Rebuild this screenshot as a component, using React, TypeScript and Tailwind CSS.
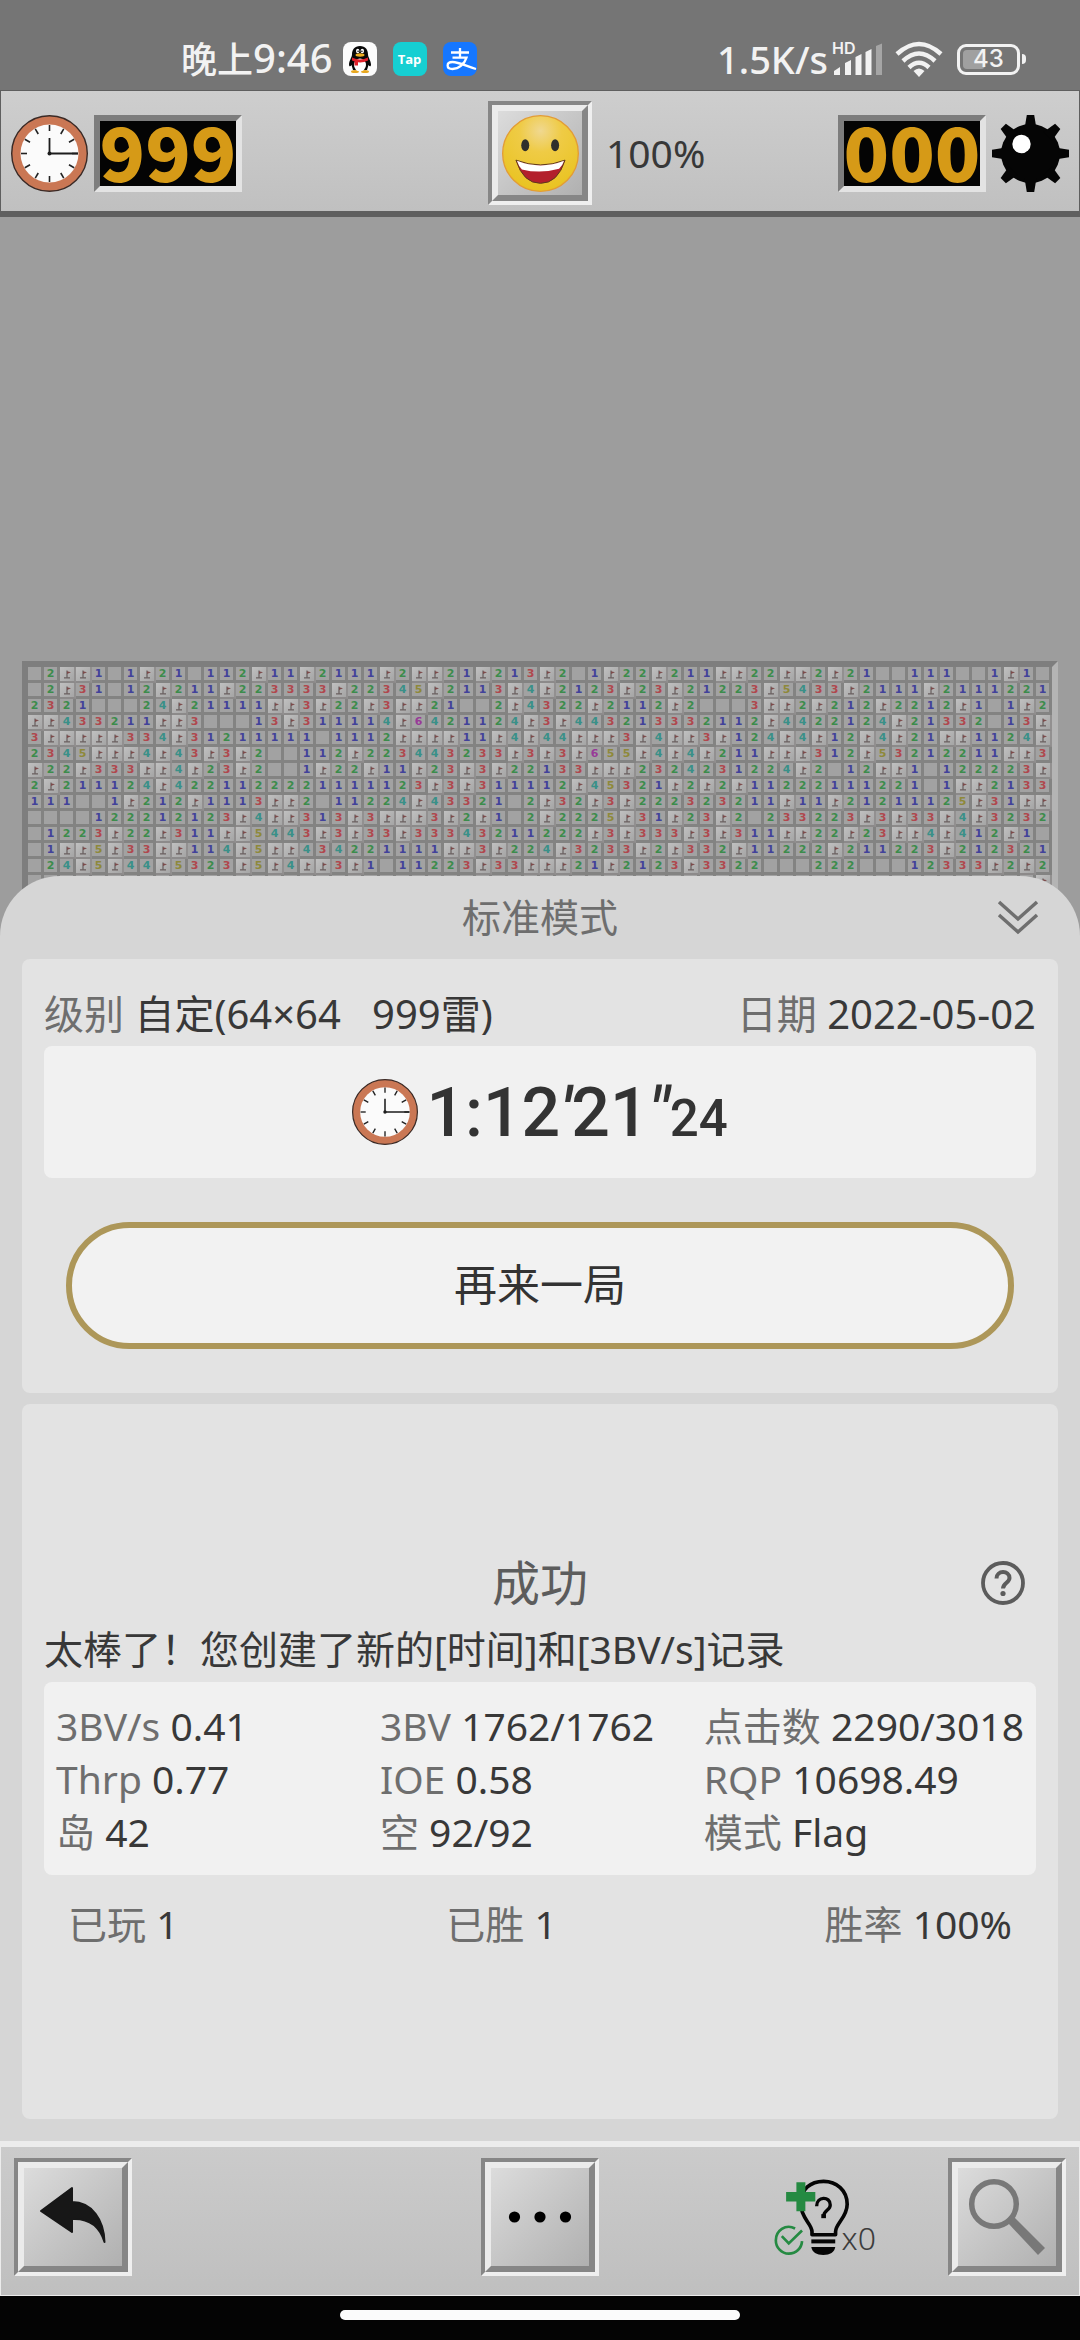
import React from "react";

const CJK = "font-['Noto_Sans','Noto_Sans_CJK_SC',sans-serif]";

/* "." is an opened empty cell, "F" a flagged one, digits are mine counts. */
const ROWS = [
  ".2FF1.1F21.112F11F211" + "1F2FF21F213F2.1F22F211" + "FF22FF2F21..111..1F1.",
  ".2F31.12F211F223333F2" + "2345F2113F4F2123F23F21" + "223F5433F2111F2111221",
  "2321...24F21111FF3F22" + "F3FF21..2F4322F2112F2." + "..3FF2F212F2212F1.1F2",
  "FF433211FF3...13F3111" + "14F6421124F3F443213332" + "112F4422124F21332.13F",
  "3FFFFF334F31211111.11" + "12FFFF11F4F44FFF3F4FF3" + "F124F4F12F4F21FF1124F",
  "2345FFF4F43F3F2..112F" + "223443233F3F3F655F4F4F" + "211FFF312F53212211FF3",
  "F22F333FF4F23F2..1F22" + "F11F23F3F22133FFF23242" + "31224F2.12FF1.122223F",
  "2F211124F422112222111" + "1123F3F311112F45321F2F" + "2F11222111221.1FF2133",
  "111..1F212F1113FF2.11" + "224F43321.2F32F3F22232" + "3211F11F21211125F31FF",
  "....122212123F4FF313F" + "3FFF3F2F1.2F2225F31F23" + "F2.233223F3F33F4F3232",
  ".1223F22F311FF5443F3F" + "33F33343211222F3F333F3" + "F311FF22F23FF4F412F1.",
  ".1FF5F33FF114F5FF4342" + "21111FF3F224F3233F2F33" + "2F11222F211223F212321",
  ".24F5F44F5323F5F4FF3F" + "1.11223F33FFF21F2123F3" + "322...222...12333F2F2",
  "....................." + "......................" + "....................F",
];

const NUM_COLOR: Record<string, string> = {
  "1": "text-[#42429a]",
  "2": "text-[#3c8c4c]",
  "3": "text-[#b0484e]",
  "4": "text-[#3a9088]",
  "5": "text-[#8e893a]",
  "6": "text-[#983a98]",
};

function Cell({ value }: { value: string }) {
  if (value === "F") {
    return (
      <div className="flex aspect-square items-center justify-center border-r-2 border-b-2 border-r-[#929090] border-b-[#8c8a8a] bg-gradient-to-br from-[#c0c0c0] to-[#a5a5a5]">
        <svg viewBox="0 0 14 14" className="size-full" aria-hidden="true">
          <path d="M7 3.5V10.5M4 10.900H10" stroke="#574a4a" strokeWidth="1" fill="none" />
          <path d="M7 4.300L11 5.300L7 7Z" fill="#7c4a4a" />
        </svg>
      </div>
    );
  }
  return (
    <div className="flex aspect-square items-center justify-center border-r-[3px] border-b-[3px] border-[#838382] bg-[#a2a2a2] font-['DejaVu_Sans'] text-[11px] leading-none font-bold">
      <span className={NUM_COLOR[value]}>{value === "." ? "" : value}</span>
    </div>
  );
}

function ClockIcon({ className }: { className: string }) {
  return (
    <svg viewBox="0 0 77 77" className={className} aria-hidden="true">
      <circle cx="38.5" cy="38.5" r="37.8" fill="#ca7754" stroke="#3a2a26" strokeWidth="1.4" />
      <circle cx="38.5" cy="38.5" r="29" fill="#fbfbfb" />
      {Array.from({ length: 12 }, (_, i) => (
        <path key={i} d="M38.5 10V16" stroke="#222" strokeWidth="1.6" transform={`rotate(${i * 30} 38.5 38.5)`} />
      ))}
      <path d="M38.5 23V38.5H67" stroke="#1d1d1d" strokeWidth="1.8" fill="none" />
      <circle cx="38.5" cy="38.5" r="2" fill="#1d1d1d" />
    </svg>
  );
}

function MineIcon() {
  return (
    <svg viewBox="0 0 77 77" className="size-[77px]" aria-hidden="true">
      <circle cx="38.5" cy="38.5" r="29.5" fill="#050505" />
      {Array.from({ length: 8 }, (_, i) => (
        <path key={i} d="M34.8 0H42.2L44.5 14H32.5Z" fill="#050505" transform={`rotate(${i * 45} 38.5 38.5)`} />
      ))}
      <circle cx="29.5" cy="29" r="9.2" fill="#fff" />
    </svg>
  );
}

function SmileIcon() {
  return (
    <svg viewBox="54 56 232 232" className="size-[77px]" aria-hidden="true">
      <defs>
        <radialGradient id="face" cx="0.5" cy="0.2" r="0.8">
          <stop offset="0" stopColor="#f0d890" />
          <stop offset="0.35" stopColor="#efcb45" />
          <stop offset="1" stopColor="#e9c320" />
        </radialGradient>
      </defs>
      <circle cx="170" cy="172" r="114" fill="url(#face)" stroke="#e39c35" strokeWidth="4" />
      <ellipse cx="124" cy="147" rx="12" ry="18" fill="#2f2f2c" />
      <ellipse cx="214" cy="147" rx="12" ry="18" fill="#2f2f2c" />
      <path d="M96 192Q170 221 244 192Q222 262 170 262Q118 262 96 192Z" fill="#b3202c" stroke="#5c3a1c" strokeWidth="3" />
      <path d="M99 194Q170 222 241 194Q236 210 226 218Q170 234 114 220Q104 210 99 194Z" fill="#fff" />
    </svg>
  );
}

function QQIcon() {
  return (
    <svg viewBox="0 0 34 34" className="size-[34px]" aria-hidden="true">
      <rect width="34" height="34" rx="8" fill="#fcfcfc" />
      <ellipse cx="12" cy="29.5" rx="4" ry="1.6" fill="#e8a820" />
      <ellipse cx="22" cy="29.5" rx="4" ry="1.6" fill="#e8a820" />
      <path d="M17 4C11.5 4 9 8 9 12.500C9 15 6 19 6 22.500C6 25 7.500 24.500 8.500 23L10 28H24L25.500 23C26.500 24.500 28 25 28 22.500C28 19 25 15 25 12.500C25 8 22.500 4 17 4Z" fill="#080808" />
      <ellipse cx="17" cy="23" rx="6" ry="6.500" fill="#fff" />
      <ellipse cx="14.700" cy="9" rx="1.700" ry="2.300" fill="#fff" />
      <ellipse cx="19.300" cy="9" rx="1.700" ry="2.300" fill="#fff" />
      <circle cx="15.100" cy="9.300" r="0.800" />
      <circle cx="18.900" cy="9.300" r="0.800" />
      <ellipse cx="17" cy="13" rx="4.500" ry="1.700" fill="#efae20" />
      <path d="M9 15.500Q17 19.500 25 15.500V18.500Q20 21 15 20.300V23.500H11.500V19.500L9 18.500Z" fill="#e0212b" />
    </svg>
  );
}

function PayIcon() {
  return (
    <svg viewBox="0 0 34 34" className="size-[34px]" aria-hidden="true">
      <rect width="34" height="34" rx="8" fill="#1677ff" />
      <path
        d="M8 10.500H26M17 6V15.500M9.500 15.700H23.500C21.500 22 16 27 9.500 27C3 27 3 20 9.500 20C16 20 24 24.500 33 27"
        stroke="#fff"
        strokeWidth="2.300"
        fill="none"
      />
    </svg>
  );
}

function StatusBar() {
  return (
    <div className={`flex h-[90px] items-center justify-between bg-[#757575] pt-[28px] pr-[54px] pl-[181px] text-[#f2f2f2] ${CJK}`}>
      <div className="flex items-center">
        <span className="mr-[10px] font-medium">
          <span className="text-[36px] leading-[40px]">晚上</span>
          <span className="text-[40px] leading-[40px]">9:46</span>
        </span>
        <div className="flex gap-4">
          <QQIcon />
          <span className="flex size-[34px] items-center justify-center rounded-lg bg-[#16cfd2] font-['Open_Sans'] text-[13px] leading-none font-bold text-white">
            Tap
          </span>
          <PayIcon />
        </div>
      </div>
      <div className="flex items-center">
        <span className="text-[38px] leading-[40px] font-medium">1.5K/s</span>
        <div className="relative mr-3 ml-[6px] h-[34px] w-[49px]">
          <span className="absolute -top-[2px] -left-[2px] font-['Inter'] text-[16px] leading-[16px] font-semibold">HD</span>
          <svg viewBox="0 0 49 34" className="size-full" aria-hidden="true">
            <path d="M0 33V29L6 25V33ZM11 33V21L17 18V33ZM21.500 33V15L27.500 12V33ZM31.500 33V10L37.500 7V33Z" fill="#f2f2f2" />
            <path d="M42 33V4L48 1.500V33Z" fill="#a5a5a5" />
          </svg>
        </div>
        <svg viewBox="0 0 48 36" className="mr-[14px] h-[36px] w-[48px]" aria-hidden="true">
          <g fill="none" stroke="#f2f2f2" strokeWidth="4.500">
            <path d="M2 13Q24 -7 46 13" />
            <path d="M8 20Q24 5 40 20" />
            <path d="M14 26.500Q24 17 34 26.500" />
          </g>
          <path d="M18.500 30Q24 25 29.500 30L24 36Z" fill="#f2f2f2" />
        </svg>
        <div className="flex items-center gap-[2px]">
          <div className="relative flex h-[31px] w-[63px] items-center justify-center rounded-[9px] border-[3px] border-[#f2f2f2]">
            <span className="absolute top-[3px] left-[3px] h-[19px] w-[22px] rounded-[4px] bg-[#a0a0a0]" />
            <span className="relative font-['Inter'] text-[24px] leading-none font-medium">43</span>
          </div>
          <span className="h-[10px] w-1 rounded-r-sm bg-[#f2f2f2]" />
        </div>
      </div>
    </div>
  );
}

function Led({ value }: { value: string }) {
  return (
    <div className="flex h-[77px] w-[148px] items-center justify-center border-[6px] border-t-[#7d7d7d] border-r-[#e3e3e3] border-b-[#e3e3e3] border-l-[#7d7d7d] bg-[#040404] pb-2 font-['Noto_Sans_CJK_SC',sans-serif] text-[75px] leading-[57px] font-black text-[#d69a17]">
      {value}
    </div>
  );
}

function BevelButton({ label, small, children }: { label: string; small?: boolean; children: React.ReactNode }) {
  return (
    <button
      aria-label={label}
      className={`border-4 border-t-[#868686] border-r-[#efefef] border-b-[#efefef] border-l-[#868686] ${small ? "size-[104px]" : "size-[118px]"}`}
    >
      <span className="flex size-full items-center justify-center border-[6px] border-t-[#ebebeb] border-r-[#868686] border-b-[#868686] border-l-[#ebebeb] bg-gradient-to-br from-[#dcdcdc] to-[#b0b0b0]">
        {children}
      </span>
    </button>
  );
}

function TopBar() {
  return (
    <header className="grid h-[127px] grid-cols-[1fr_auto_1fr] items-center border border-b-[6px] border-[#5f5f5f] bg-gradient-to-b from-[#cecece] to-[#c0c0c0] pt-[5px] pr-[10px] pb-[1px] pl-[10px]">
      <div className="flex gap-[6px]">
        <ClockIcon className="size-[77px]" />
        <Led value="999" />
      </div>
      <BevelButton label="重新开始" small>
        <SmileIcon />
      </BevelButton>
      <div className="flex items-center justify-between">
        <span className="ml-[14px] font-['Noto_Sans'] text-[39px] leading-[48px] font-normal text-[#383838]">100%</span>
        <div className="flex gap-[6px]">
          <Led value="000" />
          <MineIcon />
        </div>
      </div>
    </header>
  );
}

function Board() {
  return (
    <section className="px-[22px] pt-[444px]">
      <div className="grid grid-cols-[repeat(64,minmax(0,1fr))] border-6 border-b-0 border-t-[#7e7e7e] border-r-[#b4b4b4] border-l-[#7e7e7e] bg-[#838382] pb-5">
        {ROWS.map((row, r) => row.split("").map((v, c) => <Cell key={`${r}-${c}`} value={v} />))}
      </div>
    </section>
  );
}

function Field({ label, value }: { label: string; value: string }) {
  return (
    <div className="whitespace-pre text-[#383838]">
      <span className="text-[#6e6e6e]">{label}</span> {value}
    </div>
  );
}

const STATS = [
  ["3BV/s", "0.41"],
  ["3BV", "1762/1762"],
  ["点击数", "2290/3018"],
  ["Thrp", "0.77"],
  ["IOE", "0.58"],
  ["RQP", "10698.49"],
  ["岛", "42"],
  ["空", "92/92"],
  ["模式", "Flag"],
];

function ResultSheet() {
  return (
    <main className={`relative -mt-[35px] flex flex-1 flex-col rounded-t-[60px] bg-[#d6d6d6] px-[22px] pb-[22px] text-[39px] font-normal ${CJK}`}>
      <div className="grid h-[83px] grid-cols-[1fr_auto_1fr] items-center text-[#6e6e6e]">
        <h1 className="col-start-2">标准模式</h1>
        <button aria-label="收起" className="mr-[19px] justify-self-end">
          <svg viewBox="0 0 42 38" className="h-[38px] w-[42px]" aria-hidden="true">
            <path d="M2 3L21 20L40 3M2 16L21 33L40 16" fill="none" stroke="#6f6f6f" strokeWidth="3.500" />
          </svg>
        </button>
      </div>

      <section className="rounded-lg bg-[#e3e3e3] px-[22px] pt-8 pb-11">
        <div className="mb-[9px] flex justify-between text-[40px] leading-[46px]">
          <Field label="级别" value="自定(64×64   999雷)" />
          <Field label="日期" value="2022-05-02" />
        </div>
        <div className="flex h-[132px] items-center justify-center gap-2 rounded-lg bg-[#f1f1f1]">
          <ClockIcon className="size-[66px]" />
          <div className="pt-2 font-['Roboto',sans-serif] text-[68px] leading-[80px] font-medium text-[#333]">
            1:12<i>′</i>21<i>″</i>
            <span className="text-[51px]">24</span>
          </div>
        </div>
        <div className="mt-11 px-[22px]">
          <button className="h-[127px] w-full rounded-full border-[6px] border-[#ad9759] bg-[#f2f2f2] text-[43px] text-[#333]">
            再来一局
          </button>
        </div>
      </section>

      <section className="mt-[11px] flex flex-1 flex-col justify-center rounded-lg bg-[#e3e3e3] px-[22px]">
        <div className="grid h-[66px] grid-cols-[1fr_auto_1fr] items-center text-[#5c5c5c]">
          <h2 className="col-start-2 text-[48px] leading-[60px] font-normal">成功</h2>
          <button aria-label="帮助" className="mr-[11px] justify-self-end">
            <svg viewBox="0 0 44 44" className="size-11" aria-hidden="true">
              <circle cx="22" cy="22" r="20" fill="none" stroke="#5c5c5c" strokeWidth="3.800" />
              <path d="M15.500 17.500C15.500 9 28.500 9 28.500 17C28.500 21.500 22 22 22 27.500" fill="none" stroke="#5c5c5c" strokeWidth="4" />
              <circle cx="22" cy="32.500" r="2.600" fill="#5c5c5c" />
            </svg>
          </button>
        </div>
        <p className="leading-[66px] text-[#383838]">太棒了！您创建了新的[时间]和[3BV/s]记录</p>
        <div className="grid grid-cols-[1fr_1fr_auto] rounded-lg bg-[#f1f1f1] px-3 py-[17px] leading-[53px]">
          {STATS.map(([label, value]) => (
            <Field key={label} label={label} value={value} />
          ))}
        </div>
        <div className="flex justify-between px-6 leading-[98px]">
          <Field label="已玩" value="1" />
          <Field label="已胜" value="1" />
          <Field label="胜率" value="100%" />
        </div>
      </section>
    </main>
  );
}

function HintIcon() {
  return (
    <svg viewBox="14 26 228 232" className="h-[77px] w-[76px]" aria-hidden="true">
      <path
        d="M128 194V185C128 160 94 145 94 100C94 56 124 33 163 33C202 33 234 60 234 102C234 142 199 160 199 185V194Z"
        fill="none"
        stroke="#050505"
        strokeWidth="11"
        strokeLinejoin="round"
      />
      <path d="M142 108C142 77 183 77 183 104C183 121 163 120 163 139" fill="none" stroke="#050505" strokeWidth="10" />
      <rect x="156" y="132" width="14" height="12" fill="#050505" />
      <rect x="126" y="208" width="72" height="12" fill="#050505" />
      <path d="M126 231H198C196 247 182 255 162 255C142 255 128 247 126 231Z" fill="#050505" />
      <path d="M81 36H108V65H138V94H108V123H81V94H50V65H81Z" fill="#258a42" />
      <path d="M77 175C48 160 19 182 19 211C19 232 36 251 58 251C80 251 97 234 98 213" fill="none" stroke="#258a42" strokeWidth="8" />
      <path d="M37 198L58 220L98 181" fill="none" stroke="#258a42" strokeWidth="8" />
    </svg>
  );
}

function BottomBar() {
  return (
    <footer>
      <div className="grid h-[155px] grid-cols-[1fr_auto_1fr] items-center border border-t-[6px] border-[#ececec] bg-gradient-to-b from-[#cbcbcb] to-[#bfbfbf] px-[13px] pb-2">
        <BevelButton label="返回">
          <svg viewBox="0 0 98 98" className="size-[98px]" aria-hidden="true">
            <path
              d="M17 43L48 20V34C68 34 80 52 80.500 74C76 59 66 50 48 51V64Z"
              fill="#171717"
              stroke="#171717"
              strokeWidth="2"
              strokeLinejoin="round"
            />
          </svg>
        </BevelButton>
        <BevelButton label="更多">
          <svg viewBox="0 0 98 98" className="size-[98px]" aria-hidden="true">
            <circle cx="23.500" cy="49" r="5.600" />
            <circle cx="49" cy="49" r="5.600" />
            <circle cx="74.500" cy="49" r="5.600" />
          </svg>
        </BevelButton>
        <div className="flex items-center justify-end gap-[72px]">
          <button aria-label="提示" className="flex items-end">
            <HintIcon />
            <span className="-ml-2 font-['Noto_Sans'] text-[32px] leading-[36px] font-light text-[#3c3c3c]">x0</span>
          </button>
          <BevelButton label="缩放">
            <svg viewBox="0 0 98 98" className="size-[98px]" aria-hidden="true">
              <circle cx="36" cy="36" r="22.300" fill="none" stroke="#787878" strokeWidth="5.500" />
              <path d="M50 55L56 49L87 80L80 87Z" fill="#787878" />
            </svg>
          </BevelButton>
        </div>
      </div>
      <div className="flex h-[44px] justify-center bg-[#040404] pt-[14px]">
        <div className="h-[10px] w-[37%] rounded-full bg-[#fbfbfb]" />
      </div>
    </footer>
  );
}

export default function App() {
  return (
    <div className="flex min-h-screen flex-col bg-[#9d9d9d]">
      <StatusBar />
      <TopBar />
      <Board />
      <ResultSheet />
      <BottomBar />
    </div>
  );
}
